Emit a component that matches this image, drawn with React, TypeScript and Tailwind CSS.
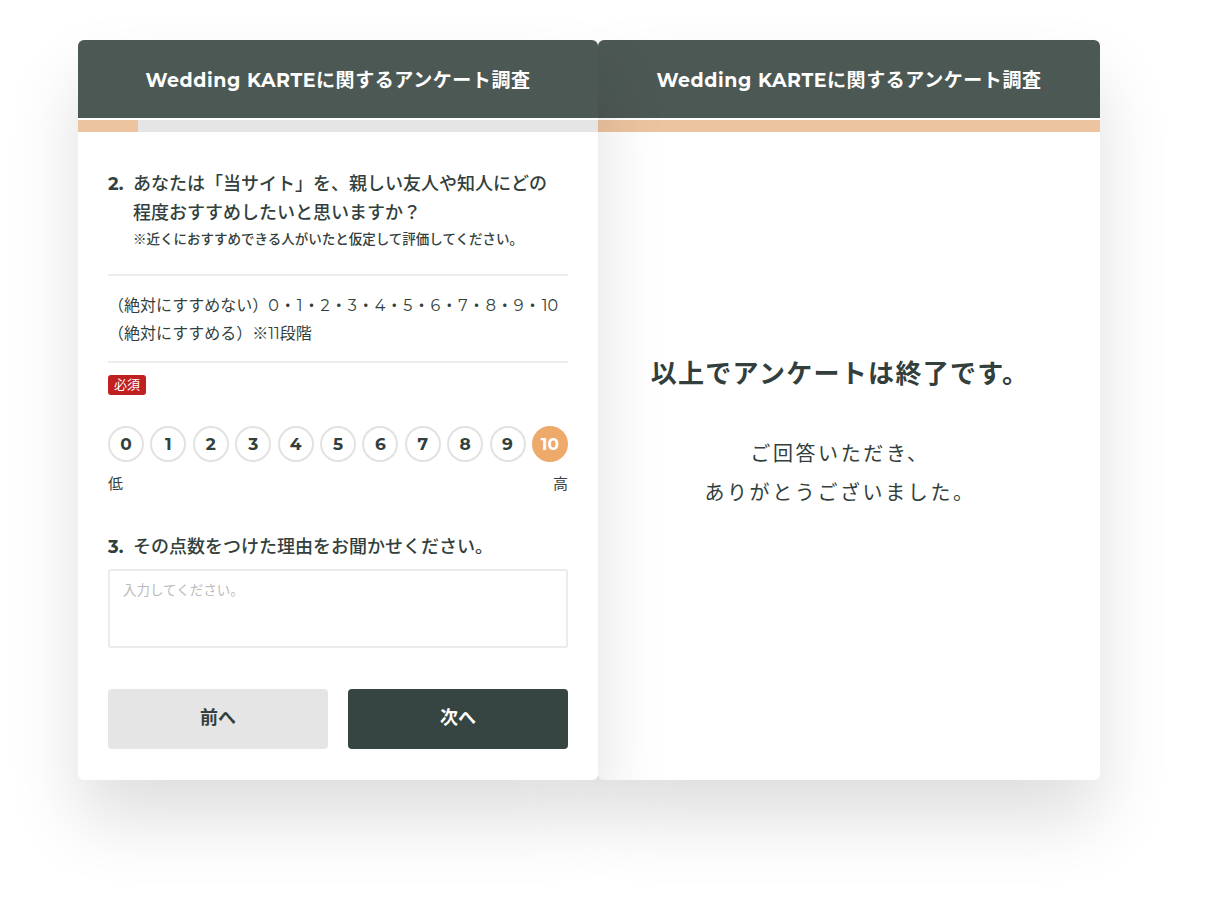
import React from "react";

const font = { fontFamily: '"Montserrat", "Inter", "Noto Sans CJK JP", sans-serif' };
const cjk = { fontFamily: '"Noto Sans CJK JP", sans-serif' };

function Dot() {
  return <span style={cjk} className="mx-[1px]">・</span>;
}

function Header() {
  return (
    <>
      <div className="h-[78px] bg-[#4c5854] flex items-center justify-center pt-[4px]">
        <span className="text-white font-bold text-[19px] tracking-[0.03em]">Wedding KARTEに関するアンケート調査</span>
      </div>
      <div className="h-[2px] bg-white" />
    </>
  );
}

export default function App() {
  const nums = Array.from({ length: 11 }, (_, i) => i);
  return (
    <div className="w-[1229px] h-[909px] bg-white relative" style={font}>
      <div className="flex pt-[40px] pl-[78px]">
        {/* left card */}
        <div className="relative z-10 w-[520px] h-[740px] bg-white rounded-[6px] overflow-hidden shadow-[0_40px_70px_rgba(0,0,0,0.13)] text-[#333f3c]">
          <Header />
          <div className="h-[12px] bg-[#e5e5e5] flex">
            <div className="w-[60px] bg-[#ecc49f]" />
          </div>
          <div className="px-[30px] pt-[38px]">
            <div className="flex text-[18px] leading-[29px] font-medium">
              <span className="font-bold w-[25px] shrink-0">2.</span>
              <div>
                <div>あなたは「当サイト」を、親しい友人や知人にどの</div>
                <div>程度おすすめしたいと思いますか？</div>
                <div className="text-[13.5px] leading-[20px]"><span style={cjk}>※</span>近くにおすすめできる人がいたと仮定して評価してください。</div>
              </div>
            </div>
            <div className="h-[2px] bg-[#ececec] mt-[25px]" />
            <div className="text-[16px] leading-[27px] pt-[15px] pb-[14px]">
              <div className="whitespace-nowrap">
                （絶対にすすめない）0<Dot />1<Dot />2<Dot />3<Dot />4<Dot />5<Dot />6<Dot />7<Dot />8<Dot />9<Dot />10
              </div>
              <div>（絶対にすすめる）<span style={cjk}>※</span>11段階</div>
            </div>
            <div className="h-[2px] bg-[#ececec]" />
            <div className="mt-[12px] inline-flex items-center h-[20px] px-[6px] bg-[#c0201f] text-white text-[13px] rounded-[3px]">必須</div>
            <div className="flex justify-between mt-[30px]">
              {nums.map((n) =>
                n === 10 ? (
                  <div key={n} className="w-[36px] h-[36px] rounded-full bg-[#eeaa6b] text-white flex items-center justify-center font-bold text-[17px]">{n}</div>
                ) : (
                  <div key={n} className="w-[36px] h-[36px] rounded-full border-2 border-[#e2e2e2] flex items-center justify-center font-bold text-[17px]">{n}</div>
                )
              )}
            </div>
            <div className="flex justify-between text-[15px] mt-[11px]">
              <span>低</span>
              <span>高</span>
            </div>
            <div className="flex text-[18px] font-medium mt-[38px] leading-[26px]">
              <span className="font-bold w-[25px] shrink-0">3.</span>
              <span>その点数をつけた理由をお聞かせください。</span>
            </div>
            <div className="mt-[9px] h-[79px] border-2 border-[#ebebeb] rounded-[3px] px-[13px] pt-[9px] text-[13.5px] text-[#bbbbbb]">入力してください。</div>
            <div className="flex gap-[20px] mt-[41px]">
              <div className="flex-1 h-[60px] rounded-[4px] bg-[#e5e5e5] flex items-center justify-center font-bold text-[18px]">前へ</div>
              <div className="flex-1 h-[60px] rounded-[4px] bg-[#364541] text-white flex items-center justify-center font-bold text-[18px]">次へ</div>
            </div>
          </div>
        </div>
        {/* right card */}
        <div className="w-[502px] h-[740px] bg-white rounded-[6px] overflow-hidden shadow-[0_40px_70px_rgba(0,0,0,0.13)] text-[#333f3c] flex flex-col">
          <Header />
          <div className="h-[12px] bg-[#ecc49f]" />
          <div className="flex-1 flex flex-col items-center pt-[223px] pr-[18px]">
            <div className="text-[26px] font-bold tracking-[0.05em]">以上でアンケートは終了です。</div>
            <div className="mt-[41px] text-[20px] leading-[39px] text-center tracking-[0.13em]">
              <div>ご回答いただき、</div>
              <div>ありがとうございました。</div>
            </div>
          </div>
        </div>
      </div>
    </div>
  );
}
